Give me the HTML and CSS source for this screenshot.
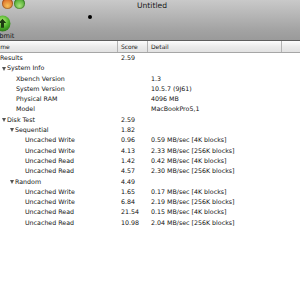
FILE: index.html
```html
<!DOCTYPE html>
<html lang="en">
<head>
    <meta charset="UTF-8">
    <title>Untitled</title>
    <link rel="stylesheet" href="styles.css">
</head>
<body>
    <div class="window">
        <div class="toolbar">
            <div class="titlebar">
                <div class="lights">
                    <span class="light minimize"></span>
                    <span class="light zoom"></span>
                </div>
                <div class="title">Untitled</div>
            </div>
            <div class="tools">
                <div class="tool">
                    <svg class="tool-icon" width="17" height="17" viewBox="0 0 16 16">
                        <defs>
                            <radialGradient id="g" cx="50%" cy="35%" r="65%">
                                <stop offset="0" stop-color="#b6f07a"/>
                                <stop offset="0.6" stop-color="#4fb12c"/>
                                <stop offset="1" stop-color="#2d7a18"/>
                            </radialGradient>
                        </defs>
                        <circle cx="8" cy="8" r="7.5" fill="url(#g)"/>
                        <path d="M8 3.5 L11.5 7.5 L9.4 7.5 L9.4 12 L6.6 12 L6.6 7.5 L4.5 7.5 Z" fill="#1d3a12"/>
                    </svg>
                    <span class="tool-label">Submit</span>
                </div>
                <span class="cursor-dot"></span>
            </div>
        </div>

        <div class="header">
            <div class="col name"><span class="name-label">Name</span></div>
            <div class="col score">Score</div>
            <div class="col detail">Detail</div>
            <div class="col rest"></div>
        </div>

        <div class="rows">
            <div class="row"><div class="name lvl-0">Results</div><div class="score">2.59</div><div class="detail"></div></div>
            <div class="row"><div class="name lvl-1"><span class="toggle open"></span>System Info</div><div class="score"></div><div class="detail"></div></div>
            <div class="row"><div class="name lvl-2"><span class="toggle"></span>Xbench Version</div><div class="score"></div><div class="detail">1.3</div></div>
            <div class="row"><div class="name lvl-2"><span class="toggle"></span>System Version</div><div class="score"></div><div class="detail">10.5.7 (9J61)</div></div>
            <div class="row"><div class="name lvl-2"><span class="toggle"></span>Physical RAM</div><div class="score"></div><div class="detail">4096 MB</div></div>
            <div class="row"><div class="name lvl-2"><span class="toggle"></span>Model</div><div class="score"></div><div class="detail">MacBookPro5,1</div></div>
            <div class="row"><div class="name lvl-1"><span class="toggle open"></span>Disk Test</div><div class="score">2.59</div><div class="detail"></div></div>
            <div class="row"><div class="name lvl-2"><span class="toggle open"></span>Sequential</div><div class="score">1.82</div><div class="detail"></div></div>
            <div class="row"><div class="name lvl-3"><span class="toggle"></span>Uncached Write</div><div class="score">0.96</div><div class="detail">0.59 MB/sec [4K blocks]</div></div>
            <div class="row"><div class="name lvl-3"><span class="toggle"></span>Uncached Write</div><div class="score">4.13</div><div class="detail">2.33 MB/sec [256K blocks]</div></div>
            <div class="row"><div class="name lvl-3"><span class="toggle"></span>Uncached Read</div><div class="score">1.42</div><div class="detail">0.42 MB/sec [4K blocks]</div></div>
            <div class="row"><div class="name lvl-3"><span class="toggle"></span>Uncached Read</div><div class="score">4.57</div><div class="detail">2.30 MB/sec [256K blocks]</div></div>
            <div class="row"><div class="name lvl-2"><span class="toggle open"></span>Random</div><div class="score">4.49</div><div class="detail"></div></div>
            <div class="row"><div class="name lvl-3"><span class="toggle"></span>Uncached Write</div><div class="score">1.65</div><div class="detail">0.17 MB/sec [4K blocks]</div></div>
            <div class="row"><div class="name lvl-3"><span class="toggle"></span>Uncached Write</div><div class="score">6.84</div><div class="detail">2.19 MB/sec [256K blocks]</div></div>
            <div class="row"><div class="name lvl-3"><span class="toggle"></span>Uncached Read</div><div class="score">21.54</div><div class="detail">0.15 MB/sec [4K blocks]</div></div>
            <div class="row"><div class="name lvl-3"><span class="toggle"></span>Uncached Read</div><div class="score">10.98</div><div class="detail">2.04 MB/sec [256K blocks]</div></div>
        </div>
    </div>
</body>
</html>
```

FILE: styles.css
```css
body {
    margin: 0;
    padding: 0;
    width: 300px;
    height: 300px;
    overflow: hidden;
    background-color: #fff;
    font-family: 'DejaVu Sans', 'Liberation Sans', sans-serif;
    color: #111;
}

.window {
    width: 300px;
}

/* title bar + toolbar, one gradient */
.toolbar {
    height: 40px;
    background: linear-gradient(#c9c9c9, #a3a3a3 75%, #9a9a9a);
    border-bottom: 1px solid #5e5e5e;
    overflow: hidden;
}

.titlebar {
    height: 13px;
    display: grid;
    grid-template-columns: 1fr;
}

.lights {
    grid-area: 1 / 1;
    display: flex;
    gap: 1px;
    margin: -2px 0 0 2px;
}

.light {
    width: 11px;
    height: 11px;
    border-radius: 50%;
    box-shadow: inset 0 0 0 1px rgba(0, 0, 0, 0.25);
}

.light.minimize {
    background: radial-gradient(circle at 50% 70%, #f6c25a, #e0782f 60%, #b8481c);
}

.light.zoom {
    background: radial-gradient(circle at 50% 70%, #a8e27a, #58b13a 60%, #2f7a1e);
}

.title {
    grid-area: 1 / 1;
    text-align: center;
    padding-left: 4px;
    font-size: 7.6px;
    line-height: 12px;
    color: #1a1a1a;
}

.tools {
    display: flex;
    align-items: flex-start;
}

.tool {
    display: flex;
    flex-direction: column;
    align-items: center;
    margin-left: -9px;
    padding-top: 2px;
}

.tool-icon {
    display: block;
}

.tool-label {
    font-size: 6.6px;
    line-height: 8px;
    color: #111;
}

.cursor-dot {
    width: 4px;
    height: 4px;
    border-radius: 50%;
    background-color: #000;
    margin: 2px 0 0 74px;
}

/* column header */
.header {
    display: grid;
    grid-template-columns: 118px 30px 134px 1fr;
    height: 11px;
    background: linear-gradient(#fdfdfd, #ececec 50%, #e2e2e2);
    border-bottom: 1px solid #a6a6a6;
    font-size: 6px;
    line-height: 11px;
    color: #222;
}

.header .col {
    padding-left: 3px;
    border-right: 1px solid #b4b4b4;
}

.header .col.name {
    padding-left: 0;
}

.header .col.rest {
    border-right: none;
}

.name-label {
    margin-left: -8px;
}

/* outline rows */
.rows {
    font-size: 6.3px;
}

.row {
    display: grid;
    grid-template-columns: 118px 30px 152px;
    height: 10.3px;
    line-height: 10.3px;
    white-space: nowrap;
}

.row .score,
.row .detail {
    padding-left: 3px;
}

.lvl-0 { padding-left: 0; }
.lvl-1 { padding-left: 2px; }
.lvl-2 { padding-left: 10px; }
.lvl-3 { padding-left: 19px; }

.toggle {
    display: inline-block;
    width: 6px;
    height: 5px;
    vertical-align: middle;
}

.toggle.open {
    width: 0;
    height: 0;
    margin-right: 1px;
    border-left: 2.5px solid transparent;
    border-right: 2.5px solid transparent;
    border-top: 4px solid #555;
}
```
